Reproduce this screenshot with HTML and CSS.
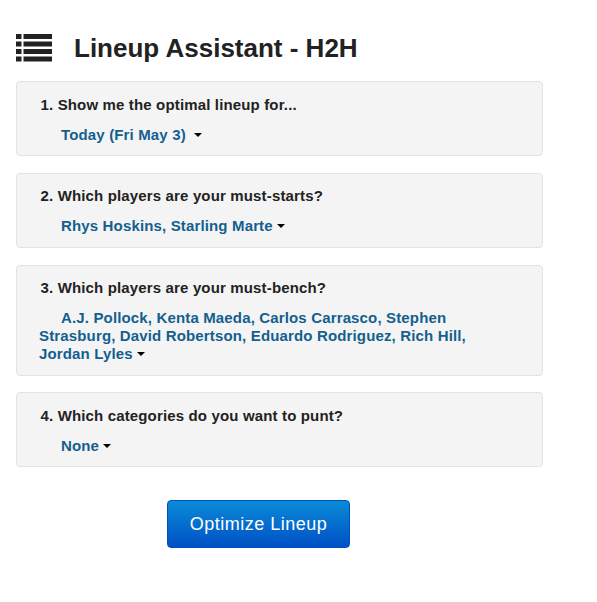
FILE: index.html
```html
<!DOCTYPE html>
<html>
<head>
<meta charset="utf-8">
<link rel="stylesheet" href="styles.css">
</head>
<body>
<div class="page">
  <h1 class="title">
    <svg class="list-icon" width="36" height="28" viewBox="0 0 36 28" aria-hidden="true">
      <rect x="0" y="0" width="5.5" height="5" fill="#222"/>
      <rect x="7.5" y="0" width="28.5" height="5" fill="#222"/>
      <rect x="0" y="7.5" width="5.5" height="5" fill="#222"/>
      <rect x="7.5" y="7.5" width="28.5" height="5" fill="#222"/>
      <rect x="0" y="15" width="5.5" height="5" fill="#222"/>
      <rect x="7.5" y="15" width="28.5" height="5" fill="#222"/>
      <rect x="0" y="22.5" width="5.5" height="5" fill="#222"/>
      <rect x="7.5" y="22.5" width="28.5" height="5" fill="#222"/>
    </svg>
    <span>Lineup Assistant - H2H</span>
  </h1>

  <div class="card">
    <div class="q">1. Show me the optimal lineup for...</div>
    <div class="answer"><a class="dd">Today (Fri May 3) &nbsp;<span class="caret"></span></a></div>
  </div>

  <div class="card">
    <div class="q">2. Which players are your must-starts?</div>
    <div class="answer"><a class="dd">Rhys Hoskins, Starling Marte <span class="caret"></span></a></div>
  </div>

  <div class="card">
    <div class="q">3. Which players are your must-bench?</div>
    <div class="answer"><a class="dd">A.J. Pollock, Kenta Maeda, Carlos Carrasco, Stephen Strasburg, David Robertson, Eduardo Rodriguez, Rich Hill, Jordan Lyles <span class="caret"></span></a></div>
  </div>

  <div class="card">
    <div class="q">4. Which categories do you want to punt?</div>
    <div class="answer"><a class="dd">None <span class="caret"></span></a></div>
  </div>

  <div class="actions">
    <button class="btn">Optimize Lineup</button>
  </div>
</div>
</body>
</html>
```

FILE: styles.css
```css
html, body {
  margin: 0;
  padding: 0;
  background: #fff;
}
body {
  font-family: "Liberation Sans", Arial, Helvetica, sans-serif;
  color: #222;
}
.page {
  width: 527px;
  margin-left: 16px;
  padding-top: 34px;
}
.title {
  display: flex;
  align-items: center;
  gap: 22px;
  margin: 0 0 19px 0;
  font-size: 26px;
  font-weight: bold;
  line-height: 28px;
  color: #222;
}
.list-icon {
  display: block;
  flex: none;
}
.card {
  background: #f4f4f4;
  border: 1px solid #e3e3e3;
  border-radius: 4px;
  padding: 12.5px 22px 11.5px 22px;
  margin-bottom: 16.75px;
}
.q {
  font-size: 15px;
  letter-spacing: 0.15px;
  font-weight: bold;
  line-height: 20px;
  color: #222;
  margin-left: 1.5px;
}
.answer {
  margin-top: 11px;
  margin-right: 20px;
  font-size: 15px;
  letter-spacing: 0.15px;
  font-weight: bold;
  line-height: 18px;
}
.dd {
  color: #135f8f;
  margin-left: 22px;
  text-decoration: none;
  cursor: pointer;
}
.caret {
  display: inline-block;
  width: 0;
  height: 0;
  vertical-align: middle;
  border-top: 4px solid #000;
  border-left: 4px solid transparent;
  border-right: 4px solid transparent;
  margin-top: -2px;
}
.actions {
  padding-top: 16px;
  padding-left: 151px;
}
.btn {
  width: 183px;
  height: 48px;
  border: 1px solid #0052b8;
  border-radius: 4px;
  background: linear-gradient(to bottom, #0a8bd6, #0051c6);
  color: #fff;
  font-family: "Liberation Sans", Arial, Helvetica, sans-serif;
  font-size: 18px;
  letter-spacing: 0.5px;
  padding: 0;
}
```
